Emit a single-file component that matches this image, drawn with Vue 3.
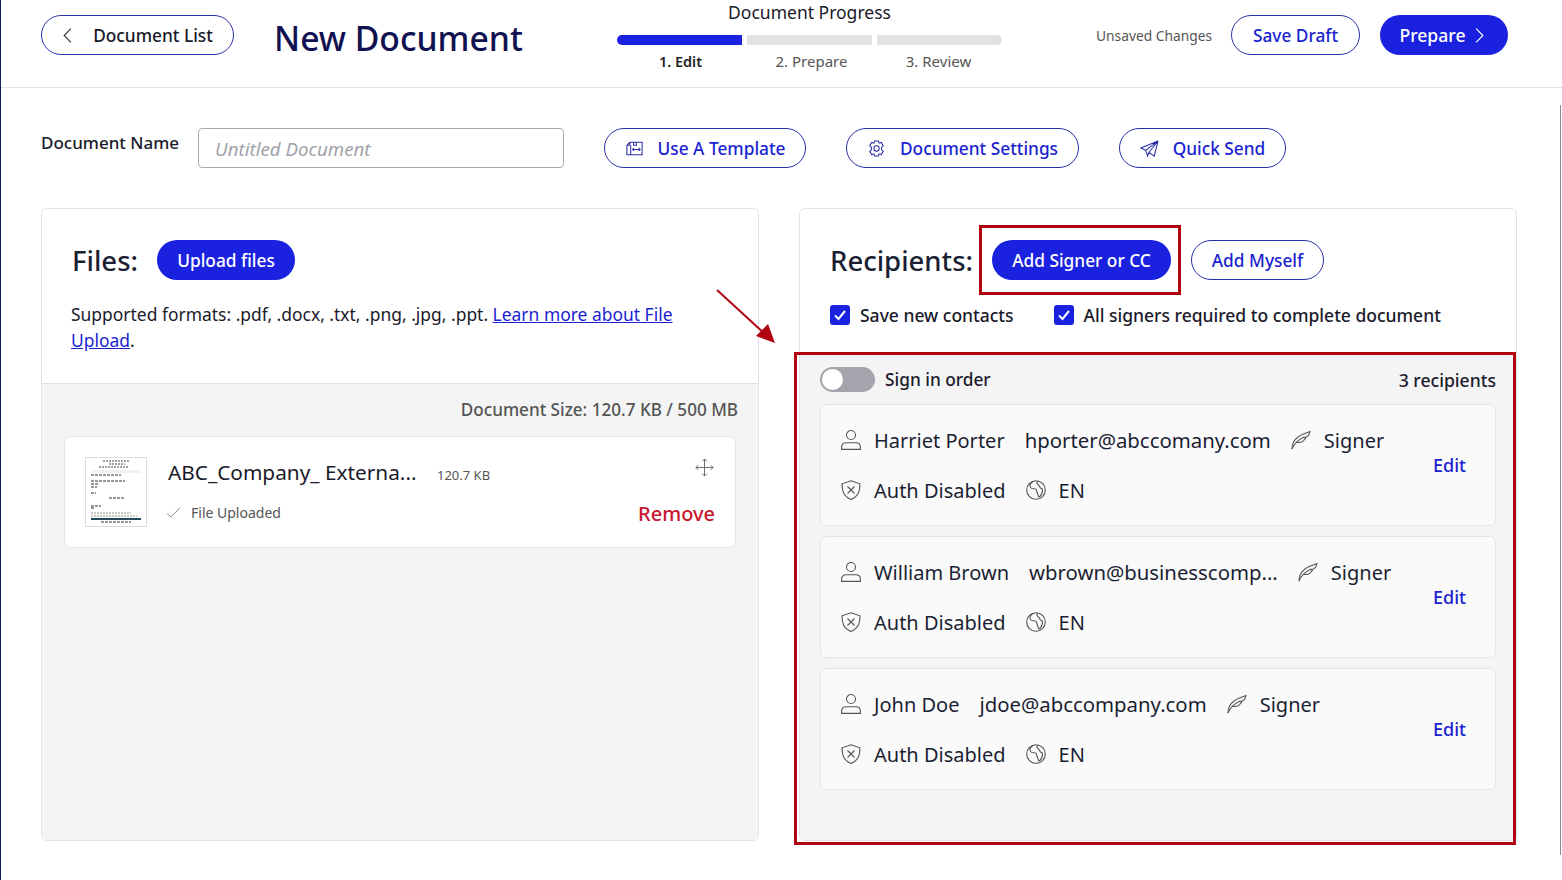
<template>
  <div class="page">
    <header class="topbar">
      <button class="btn outline back">
        <svg class="chev" viewBox="0 0 12 20"><path d="M10 2 2 10l8 8" /></svg>
        <span>Document List</span>
      </button>
      <h1>New Document</h1>
      <div class="progress">
        <div class="progress-title">Document Progress</div>
        <div class="bars">
          <span class="bar on"></span>
          <span class="bar"></span>
          <span class="bar"></span>
        </div>
        <div class="steps">
          <span class="current">1. Edit</span>
          <span>2. Prepare</span>
          <span>3. Review</span>
        </div>
      </div>
      <div class="top-actions">
        <span class="unsaved">Unsaved Changes</span>
        <button class="btn outline draft">Save Draft</button>
        <button class="btn solid prepare">
          Prepare
          <svg class="chev" viewBox="0 0 12 20"><path d="M2 2l8 8-8 8" /></svg>
        </button>
      </div>
    </header>

    <main class="content">
      <div class="toolbar">
        <label class="name-label">Document Name</label>
        <input class="name-input" placeholder="Untitled Document" />
        <button class="btn outline tool t1">
          <svg viewBox="0 0 20 20" class="tool-icon">
            <path d="M5 3.500h13v13H2V6.500zM5 3.500v3H2M9 3.500v3h3v-3M6 6.500v10M8 11h8M9.500 9.500 8 11l1.500 1.500M14.500 9.500 16 11l-1.500 1.500" />
          </svg>
          Use A Template
        </button>
        <button class="btn outline tool t2">
          <svg viewBox="0 0 20 20" class="tool-icon">
            <path d="M8 2h4l.7 2.400 2.400-.8 2 3.400-1.800 1.800v2.400l1.800 1.800-2 3.400-2.400-.8L12 18H8l-.7-2.400-2.400.8-2-3.400 1.800-1.800V8.800L2.900 7l2-3.400 2.400.8z" />
            <circle cx="10" cy="10" r="2.800" />
          </svg>
          Document Settings
        </button>
        <button class="btn outline tool t3">
          <svg viewBox="0 0 20 20" class="tool-icon">
            <path d="M19 2 1 9.500l5 2.500L19 2zM19 2l-4 16-5.500-4L19 2zM6 12l2 6 1.500-4" />
          </svg>
          Quick Send
        </button>
      </div>

      <div class="columns">
        <section class="card">
          <div class="card-top files-top">
            <div class="card-head">
              <h2 class="files-title">Files:</h2>
              <button class="btn solid upload">Upload files</button>
            </div>
            <p class="formats">
              Supported formats: .pdf, .docx, .txt, .png, .jpg, .ppt.
              <a href="#">Learn more about File Upload</a>.
            </p>
          </div>
          <div class="card-body files-body">
            <div class="doc-size">Document Size: 120.7 KB / 500 MB</div>
            <div class="file">
              <svg class="thumb" viewBox="0 0 62 70">
                <rect x="0.500" y="0.500" width="61" height="69" fill="#fff" stroke="#ddd" />
                <path d="M18 4h26M24 7h16M14 10h30" stroke="#444" stroke-width="1" stroke-dasharray="2 1" />
                <rect x="6" y="13" width="50" height="3" fill="#eef2f1" />
                <path d="M6 18h30M6 24h34M6 27h8M6 30h6M6 36h5M24 41h16M6 49h10M6 51h4M16 65h30" stroke="#333" stroke-width="1" stroke-dasharray="3 1" />
                <path d="M6 56h40M6 59h46" stroke="#777" stroke-width="0.800" stroke-dasharray="2 1" />
                <rect x="6" y="61" width="50" height="2" fill="#234c58" />
              </svg>
              <div class="file-info">
                <div class="file-line">
                  <span class="file-name">ABC_Company_ Externa...</span>
                  <span class="file-size">120.7 KB</span>
                </div>
                <div class="file-status">
                  <svg viewBox="0 0 16 12" class="tick"><path d="M1 7l4 4L15 1" /></svg>
                  File Uploaded
                </div>
              </div>
              <div class="file-side">
                <svg class="move" viewBox="0 0 20 20">
                  <path d="M10 1v18M1 10h18M7.500 3.500 10 1l2.500 2.500M7.500 16.500 10 19l2.500-2.500M3.500 7.500 1 10l2.500 2.500M16.500 7.500 19 10l-2.500 2.500" />
                </svg>
                <span class="remove">Remove</span>
              </div>
            </div>
          </div>
        </section>

        <section class="card">
          <div class="card-top rec-top">
            <div class="card-head">
              <h2 class="rec-title">Recipients:</h2>
              <button class="btn solid add-signer">Add Signer or CC</button>
              <button class="btn outline add-myself">Add Myself</button>
            </div>
            <div class="checks">
              <label class="check"><span class="box"><svg viewBox="0 0 20 20"><path d="M5 10.500l3.500 3.500L15 6" /></svg></span>Save new contacts</label>
              <label class="check"><span class="box"><svg viewBox="0 0 20 20"><path d="M5 10.500l3.500 3.500L15 6" /></svg></span>All signers required to complete document</label>
            </div>
          </div>
          <div class="card-body rec-body">
            <div class="order-row">
              <span class="toggle"><span class="knob"></span></span>
              <span class="order-label">Sign in order</span>
              <span class="rec-count">{{ recipients.length }} recipients</span>
            </div>
            <div v-for="r in recipients" :key="r.email" class="recipient">
              <div class="rec-info">
                <div class="rec-line">
                  <svg class="ico" viewBox="0 0 20 20">
                    <circle cx="10" cy="5" r="4.500" />
                    <path d="M.6 19.400v-2.400c0-2.600 2-4.300 4.600-4.300h9.600c2.600 0 4.600 1.700 4.600 4.300v2.400z" />
                  </svg>
                  <span class="val name">{{ r.name }}</span>
                  <span class="val email">{{ r.email }}</span>
                  <svg class="ico feather" viewBox="0 0 20 20">
                    <path d="M1 19c0-5 2-9 6-12 3-2.200 7-3.800 12-5.500-.5 2.500-1.500 4.500-3.500 5.500l-3 .5 2 .5C13 11 11 12.500 8 12.500H5.500" />
                    <path d="M1 19C3 14 7 10 13 7" />
                  </svg>
                  <span class="val">Signer</span>
                </div>
                <div class="rec-line">
                  <svg class="ico" viewBox="0 0 20 20">
                    <path d="M10 .8 19 3.800c0 7-1.200 12.200-9 15.700C2.200 16 1 10.800 1 3.800z" />
                    <path d="M6.500 6.500l7 7M13.500 6.500l-7 7" />
                  </svg>
                  <span class="val name">Auth Disabled</span>
                  <svg class="ico globe" viewBox="0 0 20 20">
                    <circle cx="10" cy="10" r="9.300" />
                    <path d="M7 1.500C4.500 3 3.500 5.500 4.500 7.500c1 1.500 3 1 5 1.500 1.500.5 1 2.500 1.800 4 .7 1.500.7 3 1.700 4 2-1 3-4 3.500-6 .5-1.500-.5-2.500-2-3-1-1-1-2.500-2.500-3.500C11 3.500 10 2 12 1.200" />
                  </svg>
                  <span class="val">EN</span>
                </div>
              </div>
              <a class="edit" href="#">Edit</a>
            </div>
          </div>
        </section>
      </div>
    </main>

    <!-- annotations drawn over the screenshot -->
    <div class="mark mark-btn"></div>
    <div class="mark mark-list"></div>
    <svg class="arrow" viewBox="0 0 62 58">
      <path d="M2 2 50 46" stroke="#b00510" stroke-width="2" fill="none" />
      <path d="M60 55 41 48 53 36z" fill="#b00510" />
    </svg>
    <span class="scroll-line"></span>
  </div>
</template>

<script setup>
const recipients = [
  { name: 'Harriet Porter', email: 'hporter@abccomany.com' },
  { name: 'William Brown', email: 'wbrown@businesscomp...' },
  { name: 'John Doe', email: 'jdoe@abccompany.com' },
];
</script>

<style>
html, body { margin: 0; background: #fff; }
</style>

<style scoped>
.page {
  position: relative;
  width: 1562px;
  height: 880px;
  box-sizing: border-box;
  overflow: hidden;
  border-left: 1px solid #14215e;
  font-family: "Noto Sans", "Liberation Sans", sans-serif;
  font-size: 17.3px;
  color: #1a1a2a;
  background: #fff;
}

.btn {
  box-sizing: border-box;
  height: 40px;
  border-radius: 20px;
  font-family: inherit;
  font-size: 17.3px;
  font-weight: 500;
  display: inline-flex;
  align-items: center;
  justify-content: center;
  padding: 0;
  white-space: nowrap;
}
.btn.outline {
  background: #fff;
  border: 1px solid #2b2fa8;
  color: #1a1fd0;
}
.btn.solid {
  background: #1a22e0;
  border: none;
  color: #fff;
}
.chev {
  width: 11px;
  height: 17px;
  fill: none;
  stroke: currentColor;
  stroke-width: 1.300;
}

.topbar {
  height: 88px;
  box-sizing: border-box;
  border-bottom: 1px solid #e2e2e2;
  display: flex;
  align-items: flex-start;
  padding: 15px 0 0 40px;
}
.back {
  width: 193px;
  gap: 20px;
  color: #1a1a2a !important;
}
.back .chev { color: #333; }
h1 {
  margin: 0 0 0 40px;
  width: 343px;
  font-size: 33.700px;
  line-height: 46px;
  font-weight: 500;
  color: #0f1150;
  white-space: nowrap;
}
.progress {
  margin-top: -15px;
  width: 385px;
}
.progress-title {
  text-align: center;
  height: 35px;
  line-height: 25px;
  font-size: 17.500px;
}
.bars { display: flex; gap: 5px; }
.bar {
  flex: 1;
  height: 10px;
  background: #e2e2e2;
}
.bar:first-child { border-radius: 5px 0 0 5px; }
.bar:last-child { border-radius: 0 5px 5px 0; }
.bar.on { background: #1a22e0; }
.steps {
  display: flex;
  margin-top: 5px;
  font-size: 15px;
  line-height: 22px;
  color: #555;
}
.steps span { flex: 1; text-align: center; }
.steps .current { color: #222; font-weight: 600; font-size: 14.500px; padding-right: 4px; }
.top-actions {
  margin-left: 94px;
  display: flex;
  align-items: center;
}
.unsaved { font-size: 13.800px; color: #555; width: 135px; white-space: nowrap; }
.draft { width: 129px; }
.prepare { width: 128px; margin-left: 20px; gap: 8px; font-size: 17.6px !important; padding-right: 4px; }

.content { padding: 40px 0 0 40px; }
.toolbar {
  display: flex;
  align-items: flex-start;
}
.name-label {
  width: 157px;
  font-weight: 500;
  font-size: 17px;
  line-height: 30px;
  white-space: nowrap;
}
.name-input {
  box-sizing: border-box;
  width: 366px;
  height: 40px;
  border: 1px solid #aaa;
  border-radius: 4px;
  padding: 0 16px;
  font: italic 18.700px "Noto Sans", sans-serif;
  outline: none;
}
.name-input::placeholder { color: #a2a2aa; opacity: 1; }
.tool { gap: 14px; margin-left: 40px; }
.t1 { width: 202px; }
.t2 { width: 233px; }
.t3 { width: 167px; }
.tool-icon {
  width: 19px;
  height: 19px;
  fill: none;
  stroke: #2b2fa8;
  stroke-width: 1.100;
}

.columns {
  margin-top: 40px;
  display: grid;
  grid-template-columns: 718px 718px;
  gap: 40px;
  height: 633px;
}
.card {
  box-sizing: border-box;
  border: 1px solid #e4e4e4;
  border-radius: 6px;
  display: flex;
  flex-direction: column;
  overflow: hidden;
}
.card-top { box-sizing: border-box; padding: 31px 30px 0; }
.files-top { height: 175px; border-bottom: 1px solid #e2e2e2; }
.rec-top { height: 143px; }
.card-head {
  display: flex;
  align-items: center;
  height: 40px;
}
h2 {
  margin: 0;
  padding-top: 1px;
  font-size: 27.500px;
  font-weight: 500;
  color: #1c1f33;
  white-space: nowrap;
}
.files-title { width: 85px; }
.upload { width: 138px; }
.formats {
  margin: 21px 0 0 -1px;
  width: 620px;
  font-size: 17.450px;
  line-height: 26px;
}
.formats a { color: #1a1fd0; }
.card-body { flex: 1; background: #f4f4f4; }
.files-body { padding: 12px 20px 0 22px; }
.doc-size {
  text-align: right;
  color: #555;
  font-size: 17.100px;
  line-height: 28px;
  font-weight: 500;
}
.file {
  box-sizing: border-box;
  margin-top: 12px;
  margin-right: 2px;
  height: 112px;
  background: #fff;
  border: 1px solid #e6e6e6;
  border-radius: 6px;
  display: flex;
  padding: 20px;
}
.thumb { width: 62px; height: 70px; flex: none; }
.file-info { margin-left: 21px; flex: 1; }
.file-line {
  display: flex;
  align-items: baseline;
  height: 31px;
  padding-top: 1px;
}
.file-name { font-size: 20.800px; width: 269px; white-space: nowrap; }
.file-size { font-size: 13px; color: #555; }
.file-status {
  margin-top: 14px;
  margin-left: -2px;
  display: flex;
  align-items: center;
  gap: 10px;
  font-size: 14px;
  color: #555;
}
.tick {
  width: 15px;
  height: 11px;
  fill: none;
  stroke: #777;
  stroke-width: 1;
}
.file-side {
  display: flex;
  flex-direction: column;
  align-items: flex-end;
  justify-content: space-between;
}
.move {
  width: 19px;
  height: 19px;
  margin-top: 1px;
  margin-right: 1px;
  fill: none;
  stroke: #666;
  stroke-width: 1;
}
.remove { color: #c8162f; font-size: 20px; font-weight: 500; line-height: 28px; margin-bottom: -1px; }

.rec-title { width: 162px; }
.add-signer { width: 179px; }
.add-myself { width: 133px; margin-left: 20px; }
.checks {
  display: flex;
  gap: 40px;
  margin-top: 24px;
  padding-top: 1px;
}
.check {
  display: flex;
  align-items: center;
  gap: 10px;
  line-height: 20px;
  white-space: nowrap;
  font-size: 17.500px;
  font-weight: 500;
}
.box {
  width: 20px;
  height: 20px;
  margin-top: -1px;
  background: #1a22e0;
  border-radius: 3px;
}
.box svg {
  display: block;
  fill: none;
  stroke: #fff;
  stroke-width: 2;
}
.rec-body { padding: 15px 20px 0; }
.order-row {
  display: flex;
  align-items: center;
  height: 25px;
  margin-bottom: 12px;
  line-height: 28px;
}
.toggle {
  width: 55px;
  height: 25px;
  border-radius: 13px;
  background: #a4a4ac;
  display: flex;
  align-items: center;
  padding-left: 2px;
  box-sizing: border-box;
}
.knob {
  width: 21px;
  height: 21px;
  border-radius: 50%;
  background: #fff;
}
.order-label { margin-left: 10px; font-weight: 500; }
.rec-count { margin-left: auto; font-weight: 500; font-size: 17.6px; }
.recipient {
  box-sizing: border-box;
  height: 122px;
  margin-bottom: 10px;
  background: #fafafa;
  border: 1px solid #e6e6e6;
  border-radius: 6px;
  padding: 10px 29px 0 20px;
  display: flex;
  justify-content: space-between;
}
.rec-line {
  height: 50px;
  display: flex;
  align-items: center;
}
.ico {
  width: 20px;
  height: 20px;
  flex: none;
  fill: none;
  stroke: #555;
  stroke-width: 1.100;
}
.val { font-size: 20px; color: #1c1f33; white-space: nowrap; margin-left: 13px; }
.val.email { margin-left: 20px; font-size: 20.350px; }
.feather { margin-left: 20px; }
.globe { margin-left: 20px; }
.edit {
  align-self: center;
  margin-top: -10px;
  color: #1a1fd0;
  text-decoration: none;
  font-size: 18px;
  font-weight: 500;
}

.mark {
  position: absolute;
  box-sizing: border-box;
  border: 3px solid #b00510;
  pointer-events: none;
}
.mark-btn { left: 978px; top: 225px; width: 202px; height: 70px; }
.mark-list { left: 793px; top: 352px; width: 722px; height: 493px; }
.arrow {
  position: absolute;
  left: 714px;
  top: 288px;
  width: 62px;
  height: 58px;
}
.scroll-line {
  position: absolute;
  left: 1559px;
  top: 105px;
  width: 1px;
  height: 750px;
  background: #8a8a8a;
}
</style>
